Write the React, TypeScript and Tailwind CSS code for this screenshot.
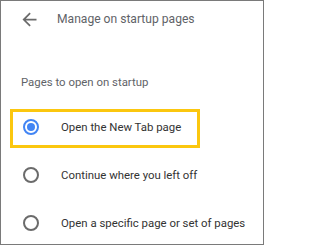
import React from "react";

function Radio({ checked }: { checked?: boolean }) {
  return checked ? (
    <div className="w-[16px] h-[16px] rounded-full border-2 border-[#4285f4] flex items-center justify-center shrink-0">
      <div className="w-[8px] h-[8px] rounded-full bg-[#4285f4]" />
    </div>
  ) : (
    <div className="w-[16px] h-[16px] rounded-full border-2 border-[#6b6b6b] shrink-0" />
  );
}

function Option({ label, checked }: { label: string; checked?: boolean }) {
  return (
    <div className="h-[48px] flex items-center pl-[22px]">
      <Radio checked={checked} />
      <span className="ml-[22px] text-[11.4px] leading-[16px] text-[#333333]">{label}</span>
    </div>
  );
}

export default function App() {
  return (
    <div className="relative w-[264px] h-[245px] border border-[#7a7a7a] bg-white font-['Roboto',sans-serif] overflow-hidden">
      <div className="h-[36px] flex items-center pl-[18px]">
        <svg width="21" height="21" viewBox="0 0 24 24" fill="#6b6b6b">
          <path d="M20 11H7.83l5.59-5.59L12 4l-8 8 8 8 1.41-1.41L7.83 13H20v-2z" />
        </svg>
        <span className="ml-[17px] text-[12.1px] leading-[16px] text-[#5f6368]">Manage on startup pages</span>
      </div>
      <div className="mt-[37px] pl-[20px] text-[11.4px] leading-[16px] text-[#5f6368]">Pages to open on startup</div>
      <div className="mt-[13px] flex flex-col">
        <Option label="Open the New Tab page" checked />
        <Option label="Continue where you left off" />
        <Option label="Open a specific page or set of pages" />
      </div>
      <div className="absolute left-[9px] top-[108px] w-[190px] h-[39px] border-[3px] border-[#fbc70f]" />
    </div>
  );
}
